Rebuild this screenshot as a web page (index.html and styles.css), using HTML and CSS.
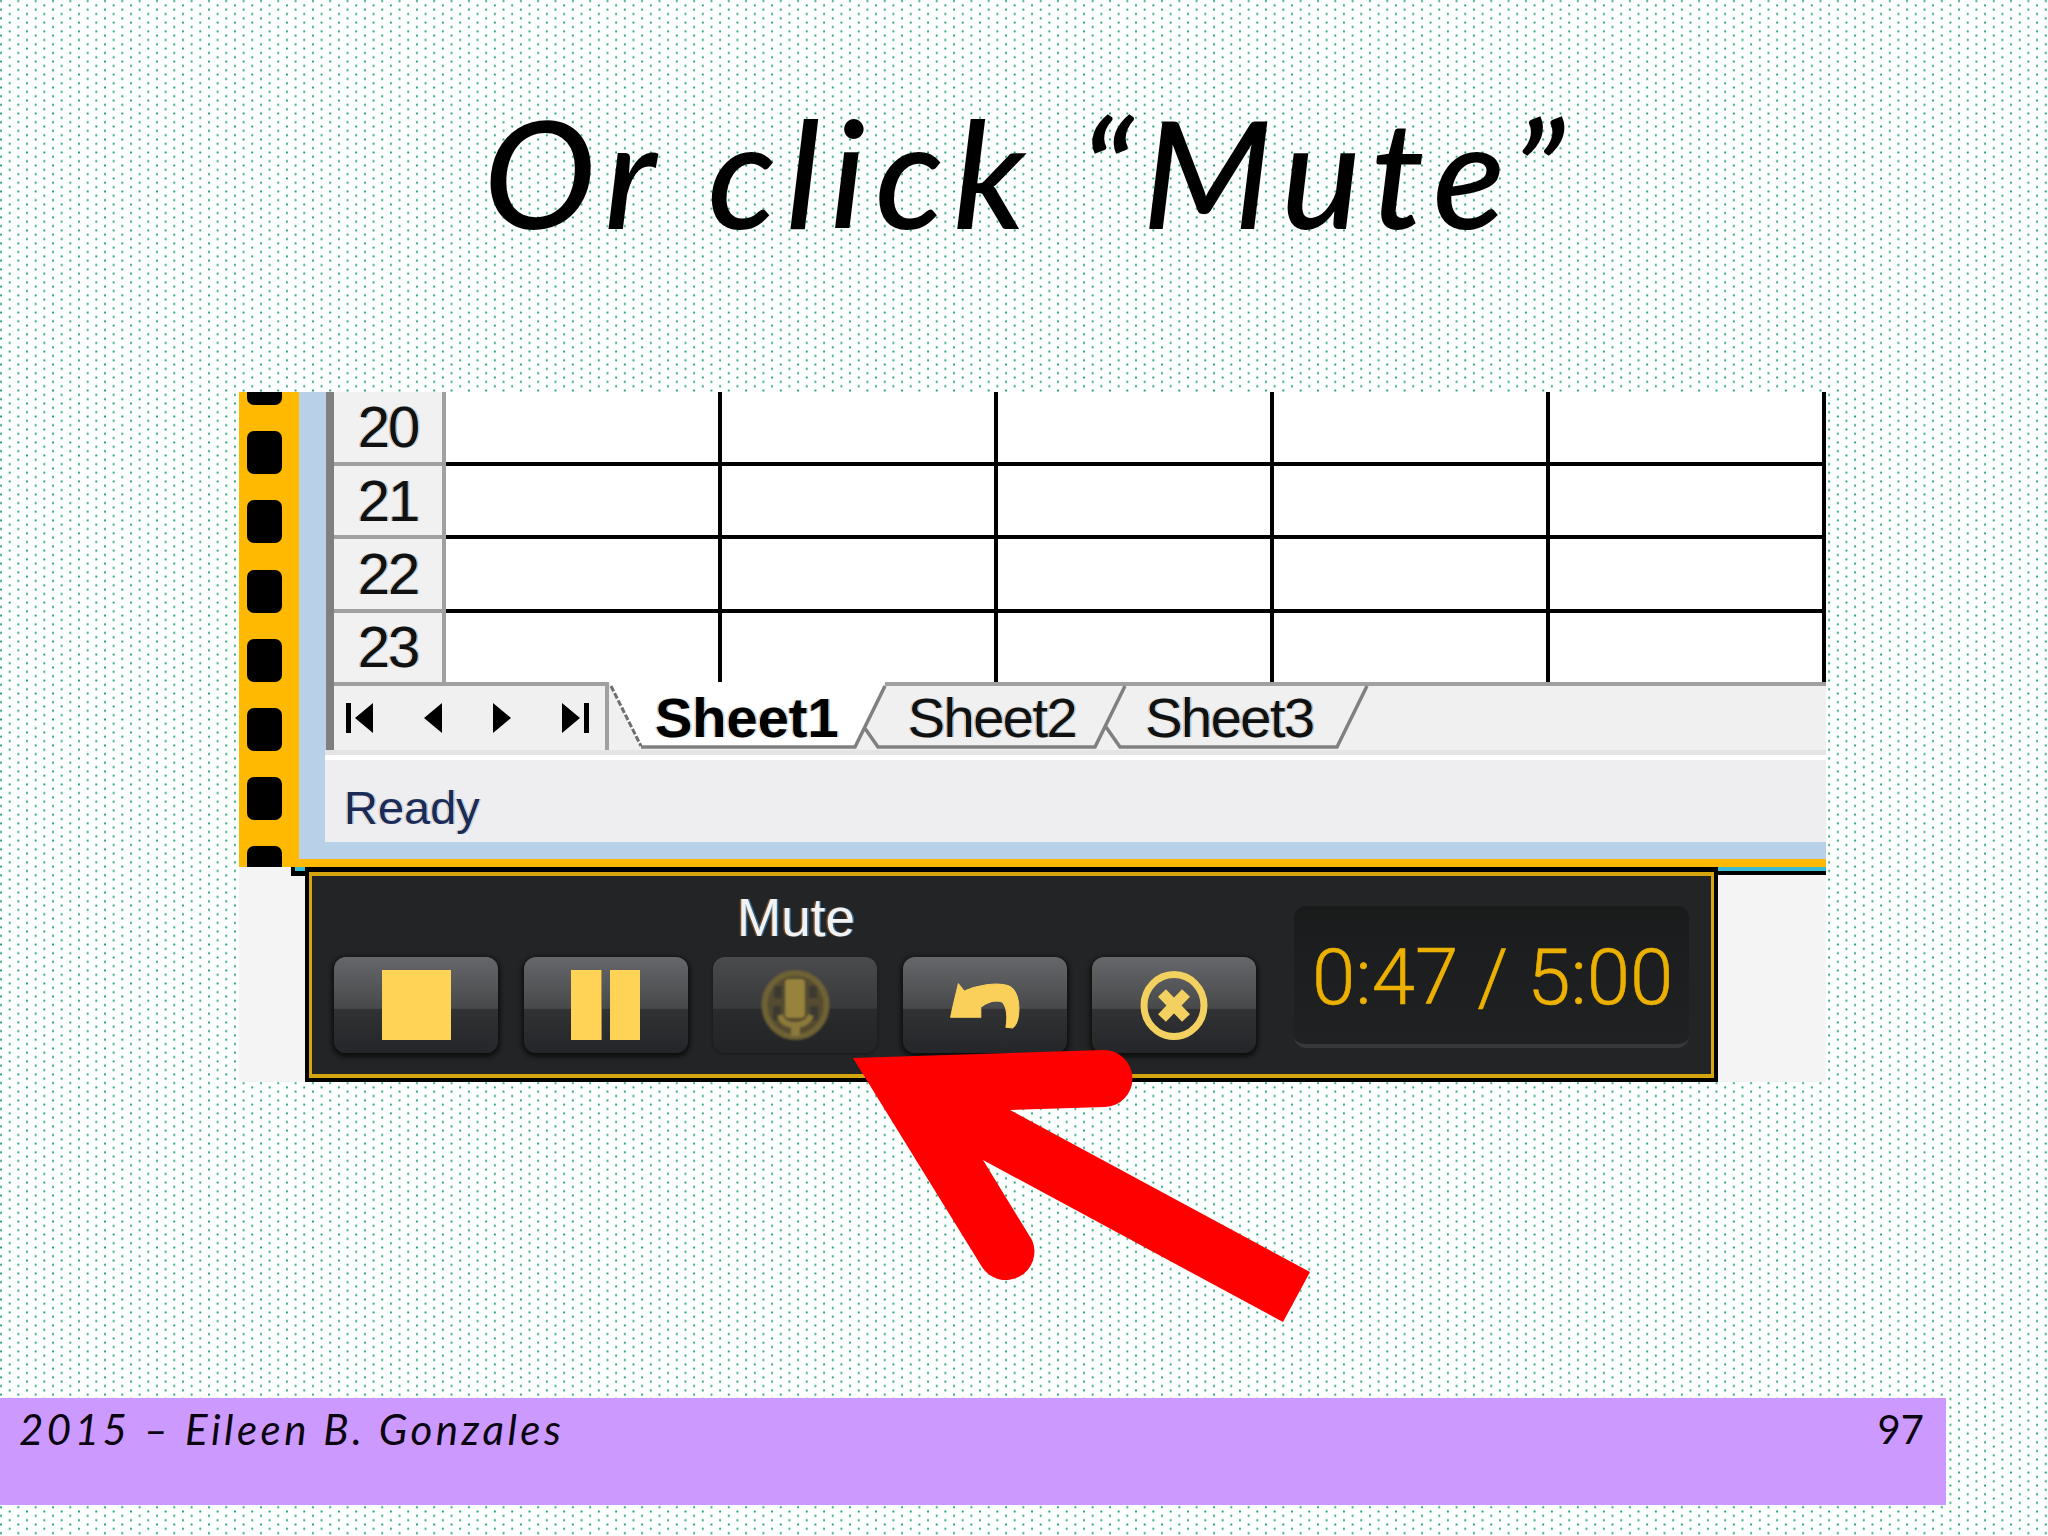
FILE: index.html
```html
<!DOCTYPE html>
<html lang="en">
<head>
<meta charset="utf-8">
<title>Or click "Mute"</title>
<link rel="stylesheet" href="styles.css">
</head>
<body>
<main class="slide">
  <h1 class="title">Or click “Mute”</h1>
  <section class="shot">
    <div class="excel">
      <div class="film">
        <i class="hole"></i><i class="hole"></i><i class="hole"></i><i class="hole"></i><i class="hole"></i><i class="hole"></i><i class="hole"></i><i class="hole"></i>
      </div>
      <div class="sheet">
        <div class="grid">
          <div class="row"><div class="rowhead">20</div><div class="cell"></div><div class="cell"></div><div class="cell"></div><div class="cell"></div><div class="cell"></div></div>
          <div class="row"><div class="rowhead">21</div><div class="cell"></div><div class="cell"></div><div class="cell"></div><div class="cell"></div><div class="cell"></div></div>
          <div class="row"><div class="rowhead">22</div><div class="cell"></div><div class="cell"></div><div class="cell"></div><div class="cell"></div><div class="cell"></div></div>
          <div class="row row-last"><div class="rowhead">23</div><div class="cell"></div><div class="cell"></div><div class="cell"></div><div class="cell"></div><div class="cell"></div></div>
        </div>
        <div class="tabbar">
          <div class="nav">
            <svg class="nav-wide" viewBox="0 0 27 30"><path d="M0 0h5v30H0zM9 15 27 0v30z"/></svg>
            <svg class="nav-narrow" viewBox="0 0 18 30"><path d="M0 15 18 0v30z"/></svg>
            <svg class="nav-narrow" viewBox="0 0 18 30"><path d="M18 15 0 0v30z"/></svg>
            <svg class="nav-wide" viewBox="0 0 27 30"><path d="M22 0h5v30h-5zM18 15 0 0v30z"/></svg>
          </div>
          <div class="tabs">
            <svg class="tab-shapes" viewBox="0 0 1217 68" preserveAspectRatio="none">
              <path class="tab-active" d="M0 0H276L246 66H32Z"/>
              <path class="tab-line-top" d="M276 2H1217"/>
              <path class="tab-line-light" d="M2 4 32 64"/>
              <path class="tab-line" d="M32 65H246L276 4M255 45 269 65H486L516 4M497 45 511 65H728L758 4"/>
            </svg>
            <span class="tab tab-on">Sheet1</span>
            <span class="tab">Sheet2</span>
            <span class="tab">Sheet3</span>
          </div>
        </div>
        <div class="band"></div>
        <div class="status">Ready</div>
      </div>
    </div>
    <div class="player-row">
      <div class="side side-left"></div>
      <div class="player">
        <div class="player-inner">
          <div class="transport">
            <div class="tip">Mute</div>
            <button class="btn" type="button"><span class="ico-stop"></span></button>
            <button class="btn" type="button"><span class="ico-pause"></span><span class="ico-pause"></span></button>
            <button class="btn btn-dim" type="button">
              <svg class="ico-mic" viewBox="0 0 69 70">
                <ellipse class="mic-ring" cx="34.500" cy="35" rx="31" ry="32"/>
                <path class="mic-dark" d="M13 16h8v12h-8zM48 16h8v12h-8zM12 36h8v14h-8zM49 36h8v14h-8z"/>
                <rect class="mic-body" x="24" y="9" width="20" height="39" rx="4"/>
                <path class="mic-cup" d="M19 45c2 8 8 10 15 10s13-2 16-10"/>
                <path class="mic-stem" d="M30 55h9v11h-9z"/>
              </svg>
            </button>
            <button class="btn" type="button">
              <svg class="ico-undo" viewBox="150 95 215 140"><path d="M178 100 195 122C235 105 290 95 325 105 352 115 362 150 358 190 356 210 350 225 340 232L320 230C325 200 325 175 310 155 290 148 265 155 245 170L245 200 155 200 160 175Z"/></svg>
            </button>
            <button class="btn" type="button">
              <svg class="ico-x" viewBox="0 0 68 69"><ellipse cx="34" cy="34.500" rx="30" ry="31"/><path d="M22 22 46 47M46 22 22 47"/></svg>
            </button>
          </div>
          <div class="timer">0:47 / 5:00</div>
        </div>
      </div>
      <div class="side side-right"></div>
    </div>
  </section>
  <footer class="foot">
    <span class="foot-text">2015 – Eileen B. Gonzales</span>
    <span class="foot-num">97</span>
  </footer>
  <svg class="arrow" viewBox="0 0 2048 1536"><path d="M853 1058 1103 1050A28.500 28.500 0 0 1 1105 1107L1010 1110 1310 1272 1283 1322 983 1160 1032 1240A28.500 28.500 0 0 1 982 1267Z"/></svg>
</main>
</body>
</html>
```
FILE: styles.css
```css
* { box-sizing: border-box; }
html, body { margin: 0; padding: 0; }
body {
  width: 2048px;
  height: 1536px;
  overflow: hidden;
  background-color: #fdfffe;
  background-image:
    radial-gradient(circle, #1f9f74 0, #1f9f74 0.7px, rgba(31,159,116,0) 1.400px),
    radial-gradient(circle, #1f9f74 0, #1f9f74 0.7px, rgba(31,159,116,0) 1.400px);
  background-size: 17.33px 8.667px;
  background-position: -7.67px -3.33px, 1px 1px;
}
.slide {
  position: relative;
  width: 2048px;
  height: 1536px;
  display: flex;
  flex-direction: column;
}
.title {
  height: 392px;
  margin: 0;
  padding: 91px 0 0 10px;
  text-align: center;
  font: italic 500 150px/160px "Lato", "Noto Sans", sans-serif;
  letter-spacing: 10px;
  color: #000;
}
.shot {
  width: 1587px;
  height: 690px;
  margin-left: 239px;
  display: flex;
  flex-direction: column;
  filter: blur(0.5px);
}
.excel { height: 475px; display: flex; }
.film {
  width: 60px;
  height: 475px;
  overflow: hidden;
  background: #ffb900;
  padding-left: 8px;
  display: flex;
  flex-direction: column;
  gap: 26.200px;
}
.hole {
  flex: none;
  width: 35px;
  height: 43px;
  border-radius: 7px;
  background: #000;
}
.hole:first-child { margin-top: -30px; }
.sheet {
  flex: 1;
  background: #b8d0e8;
  padding-bottom: 17px;
  border-bottom: 8px solid #ffb900;
}
.grid {
  margin-left: 27px;
  height: 290px;
  border-left: 8px solid #7f7f7f;
  background: #fff;
}
.row { display: flex; height: 73.500px; }
.row-last { height: 69.500px; }
.rowhead {
  width: 112px;
  background: #f1f1f1;
  border-right: 4px solid #a0a0a0;
  border-bottom: 4.500px solid #a0a0a0;
  text-align: center;
  font: 58px/70px "Liberation Sans", sans-serif;
  letter-spacing: -2px;
  color: #111;
  text-shadow: 1.500px 0 rgba(60,170,255,.5), -1.500px 0 rgba(235,140,50,.5);
}
.row-last .rowhead { line-height: 67px; }
.cell {
  width: 276px;
  border-right: 4px solid #000;
  border-bottom: 4.500px solid #000;
}
.row-last .rowhead, .row-last .cell { border-bottom: 0; }
.tabbar {
  margin-left: 27px;
  height: 68px;
  display: flex;
  border-left: 8px solid #7f7f7f;
  background: #f0f0f0;
}
.nav {
  width: 275px;
  padding-left: 12px;
  display: flex;
  align-items: center;
  gap: 51px;
  border-top: 4px solid #a0a0a0;
  border-right: 4px solid #a0a0a0;
}
.nav svg { height: 30px; fill: #000; }
.nav-wide { width: 27px; }
.nav-narrow { width: 18px; }
.tabs {
  position: relative;
  flex: 1;
  display: flex;
  gap: 69px;
  padding-left: 46px;
}
.tab-shapes { position: absolute; left: 0; top: 0; width: 100%; height: 100%; }
.tab-active { fill: #fff; }
.tab-line-top { fill: none; stroke: #a0a0a0; stroke-width: 4; }
.tab-line { fill: none; stroke: #808080; stroke-width: 3.500; }
.tab-line-light { fill: none; stroke: #6f6f6f; stroke-width: 3; stroke-dasharray: 6 2; }
.tab {
  position: relative;
  font: 56px/71px "Liberation Sans", sans-serif;
  letter-spacing: -1.500px;
  color: #111;
  text-shadow: 1.500px 0 rgba(60,170,255,.5), -1.500px 0 rgba(235,140,50,.5);
}
.tab-on { font-weight: 700; letter-spacing: 0; color: #000; }
.band { margin-left: 26px; height: 5px; background: #e4e4e4; }
.status {
  margin-left: 26px;
  height: 87px;
  border-top: 5px solid #fff;
  padding: 13px 0 0 19px;
  background: #eeeef0;
  font: 47px/70px "Liberation Sans", sans-serif;
  color: #1c2a58;
  text-shadow: 1.500px 0 rgba(60,170,255,.4), -1.500px 0 rgba(235,140,50,.4);
}
.player-row { height: 215px; display: flex; }
.side { background-color: #f4f4f4; background-repeat: no-repeat; }
.side-left {
  width: 66px;
  background-image: linear-gradient(#3cbcd0, #3cbcd0), linear-gradient(#000, #000);
  background-size: 10px 4px, 14px 9px;
  background-position: right top, right top;
}
.side-right {
  flex: 1;
  background-image: linear-gradient(#3cbcd0, #3cbcd0), linear-gradient(#000, #000);
  background-size: 100% 4px, 100% 8px;
  background-position: left top, left top;
}
.player {
  width: 1413px;
  border: 4px solid #000;
  border-top-width: 5px;
}
.player-inner {
  height: 206px;
  display: flex;
  align-items: flex-start;
  background: #232425;
  border: 3px solid #d4a50e;
  border-width: 4px 3px;
  padding-left: 22px;
}
.transport {
  display: grid;
  grid-template-columns: repeat(5, 164px);
  grid-template-rows: 81px 96px;
  column-gap: 25.500px;
}
.tip {
  grid-column: 3;
  grid-row: 1;
  padding: 12px 0 0 2px;
  text-align: center;
  font: 53px/60px "Liberation Sans", sans-serif;
  color: #f2f2f2;
  text-shadow: 1.500px 0 rgba(60,170,255,.5), -1.500px 0 rgba(235,140,50,.4);
}
.btn {
  grid-row: 2;
  padding: 0;
  border: 0;
  border-radius: 12px;
  display: flex;
  align-items: center;
  justify-content: center;
  background: linear-gradient(#66676a 0, #48494b 53.500%, #313234 54.500%, #252629 100%);
  box-shadow: 0 2px 4px 2px #0e0e0e;
}
.btn-dim { background: linear-gradient(#4a4b4d 0, #38393b 53.500%, #2a2b2d 54.500%, #232426 100%); box-shadow: 0 1px 3px #161616; }
.ico-stop { width: 69px; height: 70px; background: #ffd355; }
.ico-pause {
  width: 30px;
  height: 70px;
  background: #ffd355;
  box-shadow: 1px 0 0 #a88d44;
}
.ico-pause + .ico-pause { margin-left: 9px; box-shadow: none; }
.ico-mic { width: 69px; height: 70px; filter: blur(0.8px); }
.mic-ring { fill: #544b30; stroke: #6f6235; stroke-width: 6; }
.mic-dark { fill: #3c3a30; }
.mic-body { fill: #98833c; }
.mic-cup { fill: none; stroke: #8c7a3a; stroke-width: 6; }
.mic-stem { fill: #8c7a3a; }
.ico-undo { width: 72px; height: 47px; fill: #fbd05a; stroke: #fbd05a; stroke-width: 3; stroke-linejoin: round; }
.ico-x { width: 68px; height: 69px; fill: none; stroke: #f3d160; }
.ico-x ellipse { stroke-width: 7; }
.ico-x path { stroke-width: 11; }
.timer {
  width: 395px;
  height: 142px;
  margin: 30px 0 0 38px;
  border-radius: 12px;
  padding-left: 18px;
  background: linear-gradient(#191a1a 0, #1c1d1e 25%, #202122 100%);
  border-bottom: 4px solid #37383a;
  font: 300 78px/144px "Roboto", "Liberation Sans", sans-serif;
  -webkit-text-stroke: 0.6px #ecb000;
  color: #ecb000;
  white-space: nowrap;
}
.foot {
  margin-top: 316px;
  width: 1946px;
  height: 107px;
  padding: 6px 22px 0 19px;
  display: flex;
  justify-content: space-between;
  align-items: flex-start;
  background: #cc99ff;
  color: #0a0510;
}
.foot-text { font: italic 42px/50px "Lato", "Noto Sans", sans-serif; letter-spacing: 3.500px; }
.foot-num { font: 40px/50px "Lato", "Noto Sans", sans-serif; }
.arrow {
  position: absolute;
  left: 0;
  top: 0;
  width: 2048px;
  height: 1536px;
  fill: #ff0000;
  pointer-events: none;
}
```
